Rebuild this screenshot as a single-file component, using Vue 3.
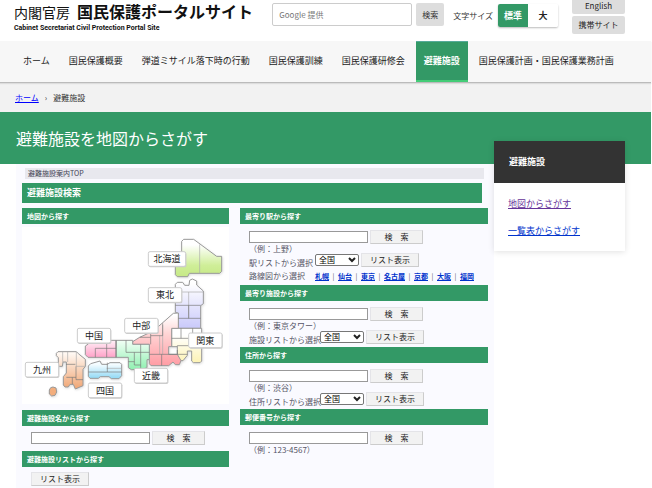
<script setup>
const nav = [
  { label: 'ホーム' },
  { label: '国民保護概要' },
  { label: '弾道ミサイル落下時の行動' },
  { label: '国民保護訓練' },
  { label: '国民保護研修会' },
  { label: '避難施設', active: true },
  { label: '国民保護計画・国民保護業務計画' },
]

const searches = [
  {
    id: 'station',
    title: '最寄り駅から探す',
    example: '（例：上野）',
    list: '駅リストから選択',
    lines: ['札幌', '仙台', '東京', '名古屋', '京都', '大阪', '福岡'],
  },
  { id: 'place', title: '最寄り施設から探す', example: '（例：東京タワー）', list: '施設リストから選択' },
  { id: 'address', title: '住所から探す', example: '（例：渋谷）', list: '住所リストから選択' },
  { id: 'postal', title: '郵便番号から探す', example: '（例：123-4567）' },
]

const regions = [
  { name: '北海道', x: 397, y: 80, w: 112 },
  { name: '東北', x: 397, y: 188, w: 100 },
  { name: '中部', x: 326, y: 280, w: 100 },
  { name: '中国', x: 184, y: 310, w: 100 },
  { name: '関東', x: 518, y: 324, w: 100 },
  { name: '九州', x: 28, y: 412, w: 100 },
  { name: '近畿', x: 355, y: 430, w: 100 },
  { name: '四国', x: 217, y: 474, w: 100 },
]
</script>

<template>
  <div class="page">
    <header class="header">
      <a class="brand" href="#">
        <span class="brand-main"><span class="brand-org">内閣官房</span><strong>国民保護ポータルサイト</strong></span>
        <span class="brand-sub">Cabinet Secretariat Civil Protection Portal Site</span>
      </a>
      <form class="site-search" @submit.prevent>
        <input type="text" aria-label="サイト内検索" placeholder="Google 提供" />
        <button type="submit">検索</button>
      </form>
      <div class="text-size">
        <span class="text-size-label">文字サイズ</span>
        <div class="toggle">
          <button type="button" class="on">標準</button>
          <button type="button">大</button>
        </div>
      </div>
      <div class="alt">
        <a href="#">English</a>
        <a href="#">携帯サイト</a>
      </div>
    </header>

    <nav class="nav">
      <a v-for="n in nav" :key="n.label" href="#" :class="{ active: n.active }">{{ n.label }}</a>
    </nav>

    <div class="crumbs">
      <a href="#">ホーム</a><span class="sep">›</span><span>避難施設</span>
    </div>

    <div class="hero"><h1>避難施設を地図からさがす</h1></div>

    <div class="body">
      <main class="content">
        <p class="inner-crumb">避難施設案内TOP</p>
        <h2 class="main-title">避難施設検索</h2>
        <div class="columns">
          <div class="col">
            <h3 class="bar">地図から探す</h3>
            <svg class="map" viewBox="18 6 621 531" role="img" aria-label="日本地図">
              <defs>
                <linearGradient id="g-hokkaido" x1="0" y1="0" x2="0" y2="1"><stop offset="0.15" stop-color="#fff" /><stop offset="0.7" stop-color="#cfee98" /><stop offset="1" stop-color="#c6e986" /></linearGradient>
                <linearGradient id="g-tohoku" x1="0" y1="0" x2="0" y2="1"><stop offset="0.1" stop-color="#fff" /><stop offset="1" stop-color="#c9c9fb" /></linearGradient>
                <linearGradient id="g-chubu" x1="0" y1="0" x2="0" y2="1"><stop offset="0.05" stop-color="#fff" /><stop offset="0.4" stop-color="#ffd4d4" /><stop offset="1" stop-color="#ff9ca4" /></linearGradient>
                <linearGradient id="g-kanto" x1="0" y1="0" x2="0" y2="1"><stop offset="0.2" stop-color="#fff" /><stop offset="1" stop-color="#fdf3b4" /></linearGradient>
                <linearGradient id="g-kinki" x1="0" y1="0" x2="0" y2="1"><stop offset="0" stop-color="#f2fff6" /><stop offset="1" stop-color="#8ff0b0" /></linearGradient>
                <linearGradient id="g-chugoku" x1="0" y1="0" x2="0" y2="1"><stop offset="0" stop-color="#fff0f7" /><stop offset="1" stop-color="#ffa2c8" /></linearGradient>
                <linearGradient id="g-shikoku" x1="0" y1="0" x2="0" y2="1"><stop offset="0.2" stop-color="#f4fcff" /><stop offset="1" stop-color="#8fd8f4" /></linearGradient>
                <linearGradient id="g-kyushu" x1="0" y1="0" x2="0" y2="1"><stop offset="0.05" stop-color="#fff8f2" /><stop offset="1" stop-color="#f0a573" /></linearGradient>
              </defs>
              <g class="land">
                <path fill="url(#g-hokkaido)" d="M503 43H533L602 94H617V139L611 145H520L515 155H484L478 149V116L497 96V49Z" />
                <path fill="url(#g-tohoku)" d="M484 172H500L506 181H519L521 166L529 162L542 168V180L562 198V236L554 242V310H487V265L478 262V178Z" />
                <path fill="url(#g-kanto)" d="M467 310H557V408L552 413H532L527 408V378H514V391L501 407H484V365H467Z" />
                <path fill="url(#g-chubu)" d="M487 264V310H467V365H458V388H484L495 407L490 419H478L471 411L458 422H405L400 416V358H350V350L371 337L412 318L438 295L472 265Z" />
                <path fill="url(#g-kinki)" d="M300 346H350V358H400V404H393V428L375 434H346L337 428V397H300Z" />
                <path fill="url(#g-chugoku)" d="M222 346H300V397H216L208 389V363L217 357Z" />
                <path fill="url(#g-shikoku)" d="M224 416L252 408L257 418H274L282 413H312L317 418V452L309 461H286L279 455H253L247 460H222L217 454V423Z" />
                <path fill="url(#g-kyushu)" d="M126 380H181L187 386L208 403V424L201 433V482L178 492L172 478H162L157 486H147L142 480V455L151 444V411H141L139 424H127V398L121 392V385Z" />
                <path fill="#f3ae7d" d="M104 488L111 486L120 489L122 501L117 511L107 513L100 507V495Z" />
              </g>
              <g class="borders">
                <path class="soft" d="M551 58V145M478 201H562M518 201V280M440 300V388M431 332V388M272 430H317M140 380V411M155 380V411M181 380V424M208 424H181" />
                <path d="M478 241H554M518 241V280M487 280H554M495 310V340H467M530 310V340H495M484 365V362H518M484 375V388H514M404 332H440V295M404 318V358M371 337H404M400 388H484M437 388V422M238 370H300M272 346V397M300 346V397M238 370V397M330 346V382H400M374 358V434M355 382V420H374M337 410H355M274 413V441M274 441H317M217 441H274M150 418H178M180 424V464H201M151 457H180M169 457V478" />
              </g>
              <a v-for="r in regions" :key="r.name" href="#">
                <rect class="tag-shadow" :x="r.x + 2" :y="r.y + 2" :width="r.w" height="45" rx="5" />
                <rect class="tag" :x="r.x" :y="r.y" :width="r.w" height="44" rx="5" />
                <text class="tag-text" :x="r.x + r.w / 2" :y="r.y + 32">{{ r.name }}</text>
              </a>
            </svg>
            <h3 class="bar">避難施設名から探す</h3>
            <form class="name-form" @submit.prevent>
              <input class="field" type="text" aria-label="避難施設名" />
              <button class="btn search" type="submit">検　索</button>
            </form>
            <h3 class="bar">避難施設リストから探す</h3>
            <div class="list-only"><button class="btn list" type="button">リスト表示</button></div>
          </div>

          <div class="col">
            <section v-for="s in searches" :key="s.id">
              <h3 class="bar">{{ s.title }}</h3>
              <form class="form" @submit.prevent>
                <div class="row">
                  <input :id="s.id" class="field" type="text" :aria-label="s.title" />
                  <button class="btn search" type="submit">検　索</button>
                </div>
                <label class="example" :for="s.id">{{ s.example }}</label>
                <div v-if="s.list" class="row pick">
                  <label :for="s.id + '-list'" :class="{ wide: s.lines }">{{ s.list }}</label>
                  <span class="select">
                    <select :id="s.id + '-list'"><option>全国</option></select>
                    <svg viewBox="0 0 8 6" aria-hidden="true"><path d="M1 1L4 4L7 1" /></svg>
                  </span>
                  <button class="btn list" type="button">リスト表示</button>
                </div>
                <div v-if="s.lines" class="row lines">
                  <span class="lines-label">路線図から選択</span>
                  <template v-for="(l, i) in s.lines" :key="l">
                    <span v-if="i" class="pipe">|</span><a href="#">{{ l }}</a>
                  </template>
                </div>
              </form>
            </section>
          </div>
        </div>
      </main>

      <aside class="side">
        <h2>避難施設</h2>
        <ul>
          <li><a class="visited" href="#">地図からさがす</a></li>
          <li><a href="#">一覧表からさがす</a></li>
        </ul>
      </aside>
    </div>
  </div>
</template>

<style>
body {
  background: #fff;
  overflow: hidden;
}
</style>

<style scoped>
* {
  box-sizing: border-box;
}
.page {
  padding-right: 1px;
  font-family: "Noto Sans CJK JP", "Noto Sans", sans-serif;
  font-size: 8px;
  line-height: 12px;
  color: #333;
}
h1, h2, h3, p, ul {
  margin: 0;
  padding: 0;
}
button, input, select {
  font-family: inherit;
  font-size: 8px;
  margin: 0;
  padding: 0;
}
.header {
  display: flex;
  align-items: flex-start;
  height: 41px;
  padding: 0 26px 0 14px;
}
.brand {
  flex: 1;
  color: #111;
  text-decoration: none;
  white-space: nowrap;
}
.brand-main {
  display: flex;
  align-items: baseline;
  gap: 7px;
  font-size: 16px;
  line-height: 22px;
}
.brand-org {
  font-size: 14px;
}
.brand-sub {
  display: block;
  font-family: Roboto, sans-serif;
  font-size: 7px;
  font-weight: 700;
  line-height: 10px;
}
.site-search {
  display: flex;
  gap: 4px;
  padding-top: 3px;
}
.site-search input {
  width: 140px;
  height: 23px;
  padding: 0 6px;
  border: 1px solid #ccc;
  border-radius: 2px;
  background: #fff;
}
.site-search input::placeholder {
  color: #777;
}
.site-search button {
  width: 28px;
  height: 23px;
  border: 0;
  border-radius: 2px;
  background: #ddd;
  color: #333;
}
.text-size {
  display: flex;
  align-items: center;
  gap: 5px;
  padding: 4px 0 0 9px;
}
.toggle {
  display: flex;
  border-radius: 2px;
  box-shadow: 0 1px 2px #bbb;
}
.toggle button {
  width: 30px;
  height: 23px;
  border: 0;
  border-radius: 0 2px 2px 0;
  background: #fff;
  color: #222;
  font-size: 9px;
  font-weight: 700;
}
.toggle .on {
  border-radius: 2px 0 0 2px;
  background: #396;
  color: #fff;
}
.alt {
  display: flex;
  flex-direction: column;
  gap: 2px;
  width: 53px;
  margin-left: 14px;
}
.alt a {
  height: 18px;
  border-radius: 2px;
  background: #ddd;
  color: #222;
  line-height: 18px;
  text-align: center;
  text-decoration: none;
}
.alt a:first-child {
  height: 14px;
  border-radius: 0 0 2px 2px;
  line-height: 12px;
}
.nav {
  display: flex;
  gap: 3px;
  height: 42px;
  padding-left: 15px;
  border-bottom: 1px solid #bbb;
  background: #f7f7f7;
  box-shadow: 0 1px 1px #ddd;
  position: relative;
}
.nav a {
  padding: 0 8px;
  color: #222;
  font-size: 9px;
  line-height: 40px;
  text-decoration: none;
  white-space: nowrap;
}
.nav .active {
  border-top: 1px solid #5a9;
  border-bottom: 2px solid #4c7;
  background: #396;
  color: #fff;
  font-weight: 700;
  line-height: 38px;
}
.crumbs {
  display: flex;
  align-items: center;
  height: 29px;
  padding-left: 15px;
  background: #f2f2f2;
}
.crumbs a {
  color: #00f;
}
.crumbs .sep {
  padding: 0 6px;
}
.hero {
  height: 52px;
  padding-left: 16px;
  background: #396;
}
.hero h1 {
  color: #fff;
  font-size: 16px;
  font-weight: 400;
  line-height: 53px;
}
.body {
  display: flex;
  align-items: flex-start;
  padding: 0 26px 0 16px;
}
.content {
  flex: 1;
  min-width: 0;
  min-height: 324px;
  padding: 4px 6px 0;
  background: #fafaff;
}
.inner-crumb {
  margin: 0 4px 4px 3px;
  padding-left: 3px;
  background: #e8e8ee;
  color: #445;
  font-size: 7px;
  line-height: 11px;
}
.main-title {
  margin: 0 6px 5px 0;
  padding-left: 5px;
  background: #396;
  color: #fff;
  font-size: 9px;
  line-height: 20px;
}
.columns {
  display: grid;
  grid-template-columns: 207fr 248fr;
  gap: 11px;
}
.bar {
  padding-left: 5px;
  background: #396;
  color: #fff;
  font-size: 7px;
  line-height: 16px;
}
.map {
  display: block;
  width: 100%;
  margin: 3px 0 6px;
  background: #fff;
}
.land {
  stroke: #999;
  stroke-width: 3;
  stroke-linejoin: round;
  filter: drop-shadow(2px 3px 3px #ddd);
}
.borders path {
  fill: none;
  stroke: #777;
  stroke-width: 2;
}
.borders .soft {
  stroke: #aaa;
}
.tag-shadow {
  fill: #ccc;
}
.tag {
  fill: #fff;
  stroke: #ccc;
  stroke-width: 3;
}
.tag-text {
  fill: #222;
  font-size: 27px;
  text-anchor: middle;
}
.field {
  width: 119px;
  height: 12px;
  border: 1px solid #999;
  background: #fff;
}
.btn {
  height: 14px;
  border: 1px solid #e4e4e8;
  border-right-color: #ccc;
  border-bottom-color: #ccc;
  background: #f2f2f2;
  color: #222;
  line-height: 12px;
}
.search {
  width: 53px;
}
.list {
  width: 58px;
}
.name-form {
  display: flex;
  align-items: center;
  gap: 2px;
  padding: 5px 0 6px 9px;
}
.list-only {
  padding: 5px 0 0 9px;
}
.form {
  padding: 6px 0 3px 9px;
  color: #556;
}
.row {
  display: flex;
  align-items: center;
  gap: 2px;
  white-space: nowrap;
}
.example {
  display: block;
  height: 9px;
  line-height: 9px;
}
.pick label {
  padding-top: 5px;
  line-height: 9px;
}
.pick {
  gap: 0;
}
.pick .wide {
  width: 67px;
}
.pick .list {
  margin-left: 2px;
}
.select {
  display: flex;
  align-items: center;
  margin-left: -1px;
}
.select select {
  appearance: none;
  width: 44px;
  height: 12px;
  padding-left: 3px;
  border: 1px solid #777;
  border-radius: 2px;
  background: #fff;
  color: #000;
  line-height: 10px;
}
.select svg {
  width: 8px;
  height: 6px;
  margin: 0 3px 0 -11px;
  pointer-events: none;
}
.select path {
  fill: none;
  stroke: #222;
  stroke-width: 2;
}
.lines {
  gap: 0;
  padding-top: 3px;
  font-size: 7px;
}
.lines-label {
  width: 66px;
  font-size: 8px;
}
.lines a {
  color: #03c;
  font-weight: 700;
}
.pipe {
  width: 9px;
  text-align: center;
}
.side {
  width: 131px;
  margin-top: -23px;
  background: #fff;
  box-shadow: 0 1px 6px rgba(0, 0, 0, 0.12);
}
.side h2 {
  padding-left: 15px;
  background: #333;
  color: #fff;
  font-size: 9px;
  line-height: 42px;
}
.side ul {
  padding: 7px 0 7px 14px;
  list-style: none;
}
.side li {
  font-size: 9px;
  line-height: 27px;
}
.side a {
  color: #03c;
}
.side .visited {
  color: #639;
}
</style>
